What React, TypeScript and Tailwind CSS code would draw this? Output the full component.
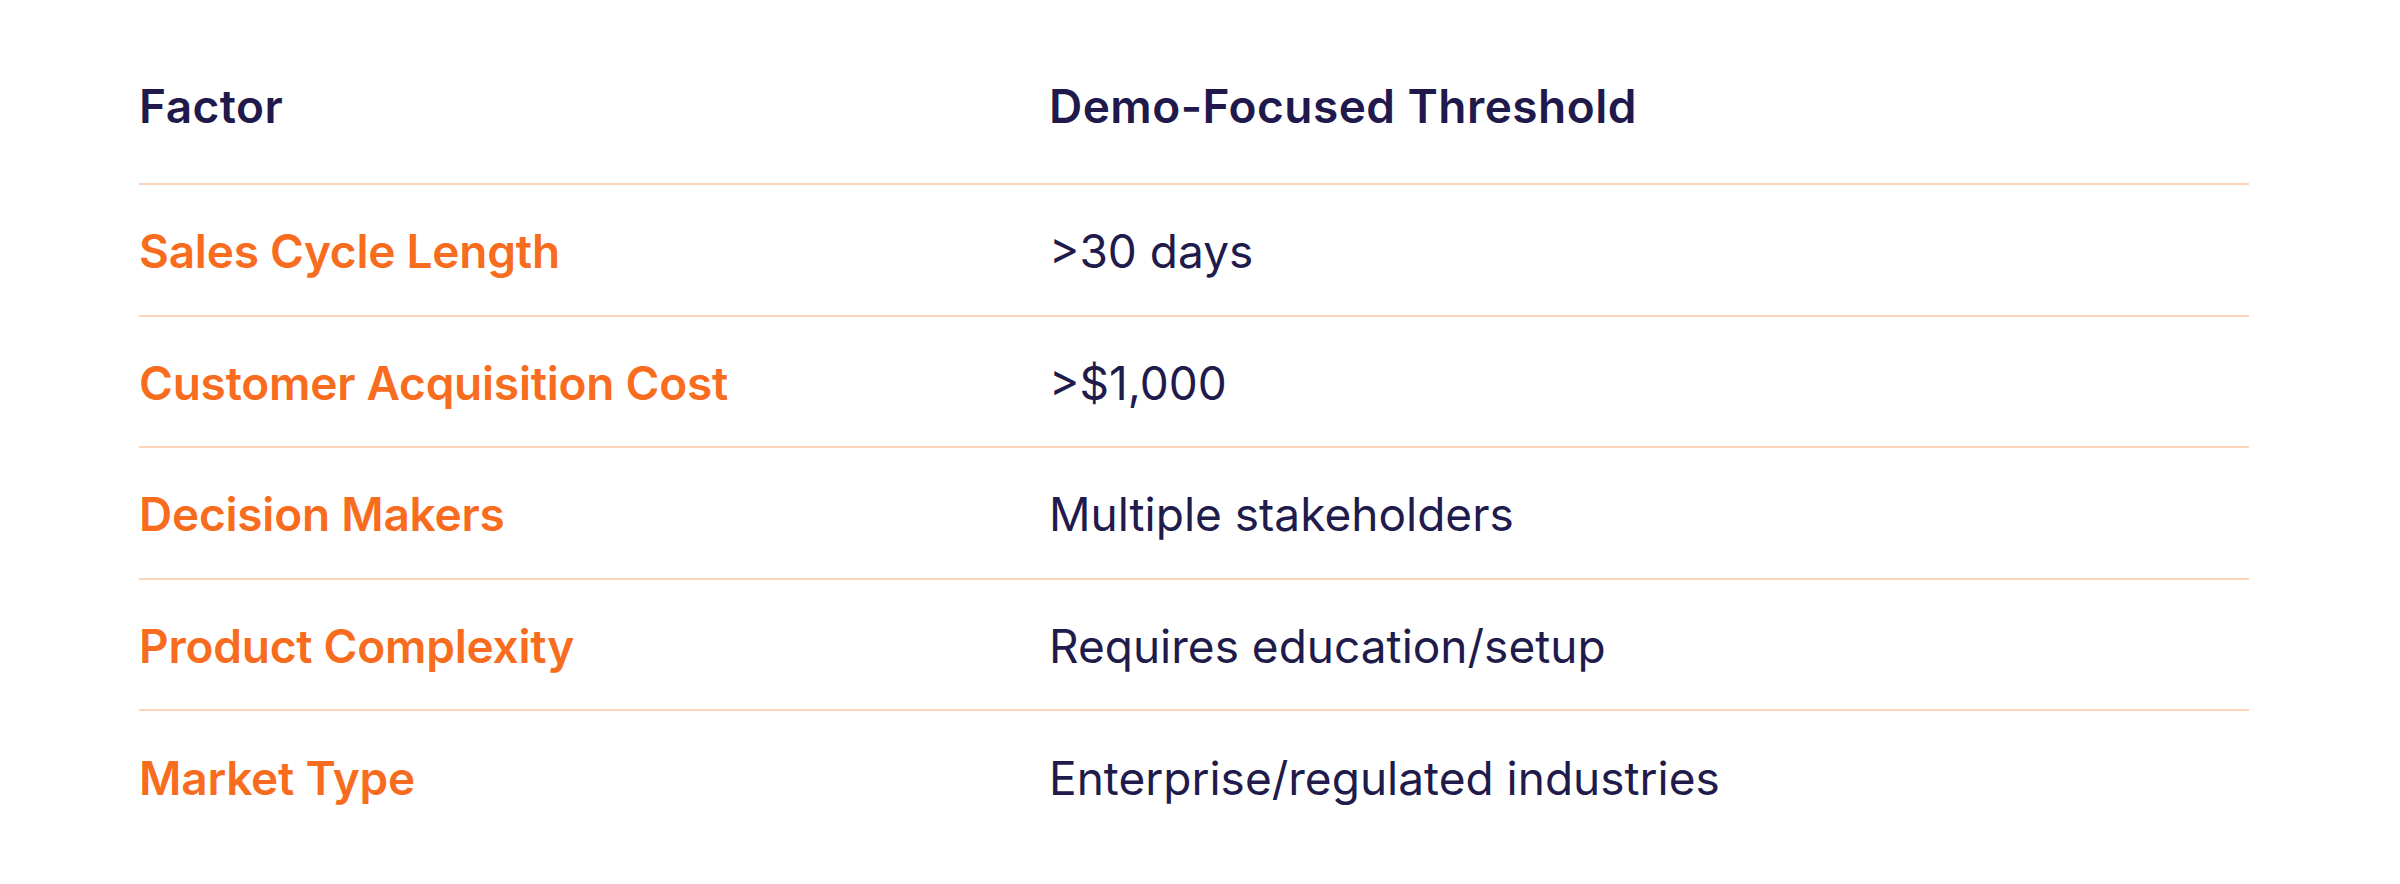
import React from "react";

const rows: [string, string][] = [
  ["Sales Cycle Length", ">30 days"],
  ["Customer Acquisition Cost", ">$1,000"],
  ["Decision Makers", "Multiple stakeholders"],
  ["Product Complexity", "Requires education/setup"],
  ["Market Type", "Enterprise/regulated industries"],
];

export default function App() {
  return (
    <div
      className="w-[2400px] h-[884px] bg-white pl-[139px] pt-[53px]"
      style={{ fontFamily: "Inter, 'Noto Sans', sans-serif" }}
    >
      <div className="w-[2110px]">
        <div className="flex items-center h-[132px] border-b-2 border-[#fad3b8] pb-[24px]">
          <div className="w-[910px] text-[46px] font-semibold text-[#1f1a4b] tracking-[0.01em]">Factor</div>
          <div className="text-[46px] font-semibold text-[#1f1a4b] tracking-[0.01em]">Demo-Focused Threshold</div>
        </div>
        {rows.map(([a, b], i) => (
          <div
            key={a}
            className={
              i < rows.length - 1
                ? "flex items-center h-[131.5px] border-b-2 border-[#fad3b8] pt-[4px]"
                : "flex items-center h-[131.5px] pt-[4px]"
            }
          >
            <div className="w-[910px] text-[46px] font-semibold text-[#f86c20] tracking-[-0.005em]">{a}</div>
            <div className="text-[46px] font-normal text-[#211b4c]">{b}</div>
          </div>
        ))}
      </div>
    </div>
  );
}
